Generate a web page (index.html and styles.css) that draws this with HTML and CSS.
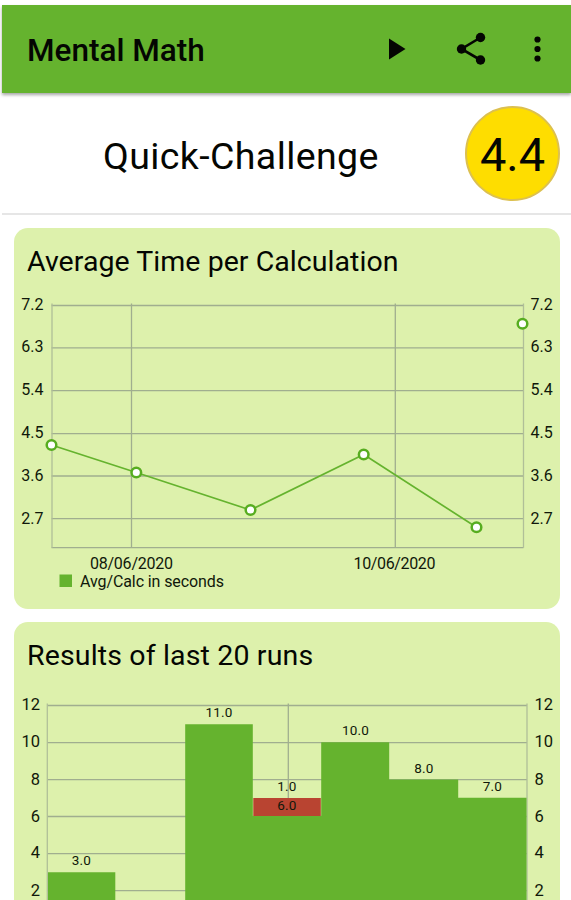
FILE: index.html
```html
<!DOCTYPE html>
<html lang="en">
<head>
<meta charset="utf-8">
<title>Mental Math</title>
<link rel="stylesheet" href="styles.css">
</head>
<body>
<header class="app-bar">
  <h1 class="app-title">Mental Math</h1>
  <svg class="actions" width="191" height="88" viewBox="380 5 191 88" aria-hidden="true">
    <path d="M389 38.500v21l16.500-10.500z"/>
    <path class="share-line" d="M480.500 37.500 461.500 49l19 11"/>
    <circle cx="480.500" cy="37.500" r="4.700"/>
    <circle cx="461.500" cy="49" r="4.700"/>
    <circle cx="480.500" cy="60" r="4.700"/>
    <circle cx="537.500" cy="39.500" r="3.100"/>
    <circle cx="537.500" cy="49" r="3.100"/>
    <circle cx="537.500" cy="58.500" r="3.100"/>
  </svg>
</header>
<section class="challenge">
  <h2 class="challenge-name"><span>Quick-Challenge</span></h2>
  <div class="score"><span>4.4</span></div>
</section>
<main class="cards">
  <section class="card card-average">
    <h3 class="card-title average-title"><span>Average Time per Calculation</span></h3>
    <svg class="chart" width="546" height="319" viewBox="14 290 546 319">
      <path class="grid" d="M51.500 305.500H523.500M51.500 347.800H523.500M51.500 390.700H523.500M51.500 433.600H523.500M51.500 476H523.500M51.500 518.700H523.500M51.500 547.700H523.500M131.500 303.500V547.700M395.300 303.500V547.700"/>
      <path class="grid edge" d="M52 303.500V547.700M523.500 303.500V547.700"/>
      <g class="axis end">
        <text x="43.500" y="309.500">7.2</text><text x="43.500" y="352.300">6.3</text><text x="43.500" y="395.300">5.4</text><text x="43.500" y="438">4.5</text><text x="43.500" y="480.500">3.6</text><text x="43.500" y="523.500">2.7</text>
      </g>
      <g class="axis">
        <text x="530.500" y="309.500">7.2</text><text x="530.500" y="352.300">6.3</text><text x="530.500" y="395.300">5.4</text><text x="530.500" y="438">4.5</text><text x="530.500" y="480.500">3.6</text><text x="530.500" y="523.500">2.7</text>
      </g>
      <g class="axis">
        <text x="90" y="568.500" textLength="83">08/06/2020</text>
        <text x="353.500" y="568.500" textLength="82">10/06/2020</text>
        <text x="80" y="586.800" textLength="144">Avg/Calc in seconds</text>
      </g>
      <path class="bar" d="M59.500 574.500h12.500v12.500h-12.500z"/>
      <path class="series" d="M51.500 445 136.300 472.500 250.500 510 363.700 454.500 476.500 527.300"/>
      <g class="dots">
        <circle cx="51.500" cy="445" r="4.800"/><circle cx="136.300" cy="472.500" r="4.800"/><circle cx="250.500" cy="510" r="4.800"/><circle cx="363.700" cy="454.500" r="4.800"/><circle cx="476.500" cy="527.300" r="4.800"/><circle cx="522.500" cy="323.800" r="4.800"/>
      </g>
    </svg>
  </section>
  <section class="card card-results">
    <h3 class="card-title results-title"><span>Results of last 20 runs</span></h3>
    <svg class="chart" width="546" height="210" viewBox="14 690 546 210">
      <path class="grid" d="M47 705.500H527M47 742.700H527M47 779.600H527M47 816.500H527M47 853.700H527M47 890.700H527M288.300 703.500V900"/>
      <path class="grid edge" d="M47.300 703.500V900M527 703.500V900"/>
      <path class="bar" d="M48 872.300H115.300V900H48zM185.200 724.200H252.800V816H321.200V742.300H389.200V779.500H458.200V797.800H526.500V900H185.200z"/>
      <path class="fail" d="M253.300 798H320.800V816H253.300z"/>
      <g class="axis large end">
        <text x="40" y="710">12</text><text x="40" y="747.300">10</text><text x="40" y="784.500">8</text><text x="40" y="821.700">6</text><text x="40" y="857.800">4</text><text x="40" y="895.500">2</text>
      </g>
      <g class="axis large">
        <text x="534.500" y="710">12</text><text x="534.500" y="747.300">10</text><text x="534.500" y="784.500">8</text><text x="534.500" y="821.700">6</text><text x="534.500" y="857.800">4</text><text x="534.500" y="895.500">2</text>
      </g>
      <g class="values">
        <text x="81.500" y="865">3.0</text><text x="219" y="717">11.0</text><text x="287" y="790.500">1.0</text><text x="287" y="809.500">6.0</text><text x="355.500" y="735.300">10.0</text><text x="424" y="772.500">8.0</text><text x="492.500" y="790.500">7.0</text>
      </g>
    </svg>
  </section>
</main>
</body>
</html>
```

FILE: styles.css
```css
* { box-sizing: border-box; }
html { overflow: hidden; }
body {
  margin: 0;
  height: 900px;
  padding: 5px 0 0 2px;
  overflow: hidden;
  background: #fff;
  color: #040602;
  font-family: Roboto, "Liberation Sans", sans-serif;
}
h1, h2, h3 { margin: 0; font-weight: 400; white-space: nowrap; }
svg { display: block; }
.app-bar {
  display: flex;
  justify-content: space-between;
  align-items: center;
  height: 88px;
  padding-left: 25px;
  background: #65b32e;
  box-shadow: 0 2px 3px rgba(0, 0, 0, .35);
}
.app-title { font-size: 31.500px; font-weight: 500; line-height: 40px; padding-top: 3px; }
.share-line { fill: none; stroke: #040602; stroke-width: 2.600; }
.actions { fill: #040602; }
.challenge {
  display: flex;
  align-items: center;
  justify-content: space-between;
  height: 122px;
  padding: 0 11px 0 101px;
  border-bottom: 2px solid #e6e6e6;
}
.challenge-name { font-size: 37.500px; line-height: 44px; padding-top: 6px; letter-spacing: .4px; }
.score {
  display: flex;
  align-items: center;
  justify-content: center;
  width: 95px;
  height: 95px;
  padding-top: 2px;
  border: 2px solid #dcc050;
  border-radius: 50%;
  background: #fedd00;
  font-size: 47px;
}
.cards { display: flex; flex-direction: column; gap: 13px; padding: 13px 11px 0 12px; }
.card { background: #ddf1ac; border-radius: 14px; overflow: hidden; }
.card-average { height: 381px; }
.card-results { height: 278px; border-radius: 14px 14px 0 0; }
.card-title { padding-left: 13px; font-size: 28.500px; line-height: 34px; }
.average-title { height: 62px; padding-top: 17px; letter-spacing: .05px; }
.results-title { height: 68px; padding-top: 17px; letter-spacing: .15px; }
.grid { fill: none; stroke: #a0ae8f; stroke-width: 1.300; }
.edge { stroke: #b0bf98; }
.axis { font-size: 16px; fill: #10180a; }
.large { font-size: 16.500px; }
.end { text-anchor: end; }
.values { font-size: 13.500px; text-anchor: middle; fill: #10180a; letter-spacing: .2px; }
.bar { fill: #65b32e; }
.fail { fill: #b94431; }
.series { fill: none; stroke: #65b32e; stroke-width: 1.700; }
.dots { fill: #fff; stroke: #57ad20; stroke-width: 2.500; }
```
